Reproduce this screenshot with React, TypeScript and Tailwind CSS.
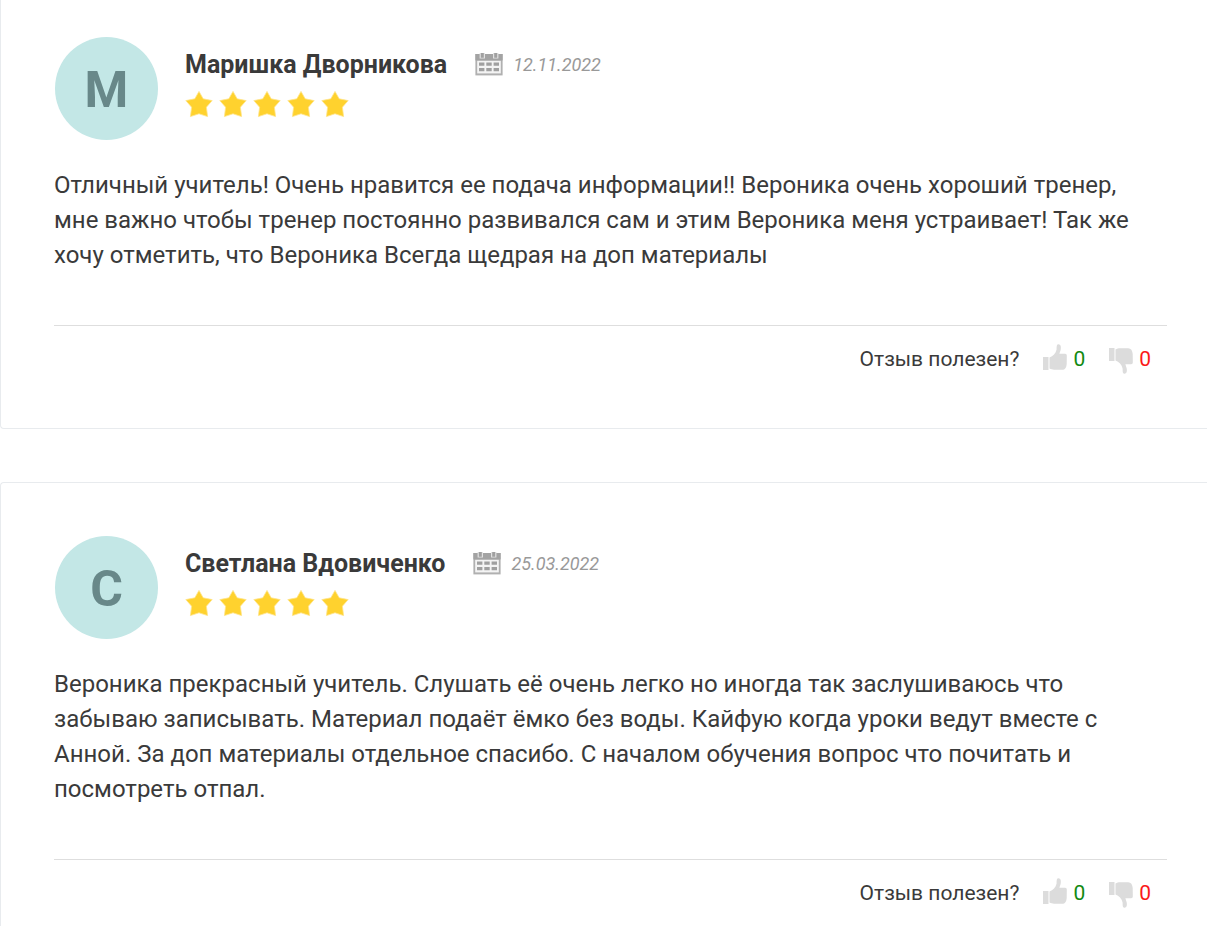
import React from 'react';

interface Review {
  id: number;
  name: string;
  date: string;
  rating: number;
  text: string;
  likes: number;
  dislikes: number;
}

const reviews: Review[] = [
  {
    id: 1,
    name: 'Маришка Дворникова',
    date: '12.11.2022',
    rating: 5,
    text: 'Отличный учитель! Очень нравится ее подача информации!! Вероника очень хороший тренер, мне важно чтобы тренер постоянно развивался сам и этим Вероника меня устраивает! Так же хочу отметить, что Вероника Всегда щедрая на доп материалы',
    likes: 0,
    dislikes: 0,
  },
  {
    id: 2,
    name: 'Светлана Вдовиченко',
    date: '25.03.2022',
    rating: 5,
    text: 'Вероника прекрасный учитель. Слушать её очень легко но иногда так заслушиваюсь что забываю записывать. Материал подаёт ёмко без воды. Кайфую когда уроки ведут вместе с Анной. За доп материалы отдельное спасибо. С началом обучения вопрос что почитать и посмотреть отпал.',
    likes: 0,
    dislikes: 0,
  },
];

const StarIcon: React.FC = () => (
  <svg className="w-7 h-7" viewBox="0 0 28 28" fill="#ffd22e" stroke="#ffe48c" strokeWidth="0.8" strokeLinejoin="round" aria-hidden="true">
    <path d="M14 1.4 L18.2 8.8 L27.2 10.6 L21.4 17.2 L22.6 26.6 L14 23.8 L5.4 26.6 L6.6 17.2 L0.8 10.6 L9.8 8.8 Z" />
  </svg>
);

const CalendarIcon: React.FC = () => (
  <svg className="w-7 h-6" viewBox="0 1 28 24" aria-hidden="true">
    <rect x="0.4" y="2" width="27.2" height="21.4" fill="#b0b0b0" />
    <rect x="0.4" y="2" width="27.2" height="6.4" fill="#a3a3a3" />
    <rect x="2.2" y="8.8" width="23.6" height="12.6" fill="#f4f4f4" />
    <path d="M4.6 1h5.4v5.6H4.6zM18 1h5.4v5.6H18z" fill="#e2e2e2" />
    <path d="M5.8 1h3v4.8h-3zM19.2 1h3v4.8h-3z" fill="#a0a0a0" />
    <path d="M4 10.6h5.4v3.2H4zM11.3 10.6h5.4v3.2h-5.4zM18.6 10.6H24v3.2h-5.4zM4 16h5.4v3.2H4zM11.3 16h5.4v3.2h-5.4zM18.6 16H24v3.2h-5.4z" fill="#a0a0a0" />
  </svg>
);

const ThumbUpIcon: React.FC = () => (
  <svg className="w-6 h-[26px]" viewBox="0 0 24 26" fill="#dcdcdc" aria-hidden="true">
    <path d="M0 13h5.5v13H0z" />
    <path d="M6.5 13.4C10 12.2 12.8 9.2 13.6 5.4C13.7 3.4 13.4 0.4 15.2 0.2C17.8 0 18.2 3 17.7 5.4C17.3 7.4 16.6 8.8 16.4 9.8H22C23.6 9.8 24 11 23.8 12.6L23.7 20C23.4 23.6 22 25.8 19.2 25.8H11C9.4 25.8 8 25.2 6.5 24.6Z" />
  </svg>
);

const ThumbDownIcon: React.FC = () => (
  <svg className="w-6 h-[26px]" viewBox="0 0 24 26" fill="#dcdcdc" aria-hidden="true">
    <path d="M0 0h5.5v13H0z" />
    <path d="M6.5 12.6C10 13.8 12.8 16.8 13.6 20.6C13.7 22.6 13.4 25.6 15.2 25.8C17.8 26 18.2 23 17.7 20.6C17.3 18.6 16.6 17.2 16.4 16.2H22C23.6 16.2 24 15 23.8 13.4L23.7 6C23.4 2.4 22 0.2 19.2 0.2H11C9.4 0.2 8 0.8 6.5 1.4Z" />
  </svg>
);

const ReviewCard: React.FC<{ review: Review; first: boolean }> = ({ review, first }) => (
  <article
    className={`border-l border-b border-[#e8ebee] pl-[53px] pr-10 ${
      first ? 'rounded-bl pt-[37px]' : 'rounded-l border-t pt-[53px]'
    }`}
  >
    <header className="flex gap-[27px]">
      <div className="flex h-[103px] w-[103px] ml-px shrink-0 items-center justify-center rounded-full bg-[#c3e7e6] pt-1 text-[50px] font-bold text-[#688889]">
        {review.name[0]}
      </div>
      <div className="pt-3">
        <div className="flex items-start">
          <h3 className="text-[25px] leading-8 font-bold">{review.name}</h3>
          <div className="ml-7 flex items-start gap-2.5 pt-1 text-lg leading-6 italic text-[#999]">
            <CalendarIcon />
            <time>{review.date}</time>
          </div>
        </div>
        <div className="mt-[9px] flex gap-1.5" role="img" aria-label={`${review.rating} / 5`}>
          {Array.from({ length: review.rating }, (_, i) => (
            <StarIcon key={i} />
          ))}
        </div>
      </div>
    </header>

    <p className="mt-7 pr-4 text-2xl leading-[35px]">{review.text}</p>

    <footer className="mt-[52px] flex h-[103px] items-start justify-end border-t border-[#dedede] pr-4 pt-[15px] text-[21px]">
      <span className="mr-6 leading-9">Отзыв полезен?</span>
      <button type="button" className="mr-6 flex h-9 items-center gap-1.5 leading-9 text-[#128a12]">
        <span className="pb-1">
          <ThumbUpIcon />
        </span>
        {review.likes}
      </button>
      <button type="button" className="flex h-9 items-center gap-1.5 leading-9 text-[#fb1a1a]">
        <span className="pt-1">
          <ThumbDownIcon />
        </span>
        {review.dislikes}
      </button>
    </footer>
  </article>
);

export default function App() {
  return (
    <main className="flex h-screen flex-col overflow-hidden bg-white font-['Roboto',sans-serif] text-[#3a3a3a]">
      <div className="flex flex-col gap-[53px]">
        {reviews.map((review, index) => (
          <ReviewCard key={review.id} review={review} first={index === 0} />
        ))}
      </div>
    </main>
  );
}
